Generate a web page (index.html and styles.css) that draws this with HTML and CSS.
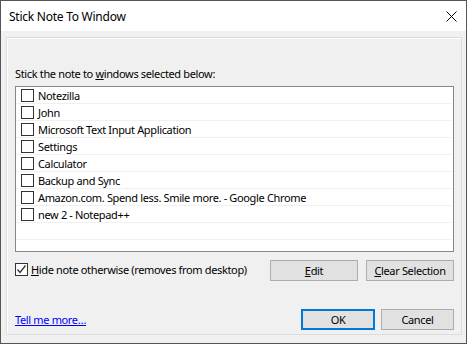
FILE: index.html
```html
<!DOCTYPE html>
<html lang="en">
<head>
  <meta charset="UTF-8" />
  <title>Stick Note To Window</title>
  <link rel="stylesheet" href="styles.css">
</head>
<body>
  <div class="window">
    <div class="title-bar">
      <span class="title">Stick Note To Window</span>
      <svg class="close" width="11" height="11" viewBox="0 0 11 11">
        <path d="M0.5 0.5 L10.5 10.5 M10.5 0.5 L0.5 10.5" stroke="#000" stroke-width="1" fill="none"/>
      </svg>
    </div>

    <div class="content">
      <div class="group">
        <div class="caption">Stick the note to <u>w</u>indows selected below:</div>

        <div class="list">
          <div class="row"><span class="check"></span>Notezilla</div>
          <div class="row"><span class="check"></span>John</div>
          <div class="row"><span class="check"></span>Microsoft Text Input Application</div>
          <div class="row"><span class="check"></span>Settings</div>
          <div class="row"><span class="check"></span>Calculator</div>
          <div class="row"><span class="check"></span>Backup and Sync</div>
          <div class="row"><span class="check"></span>Amazon.com. Spend less. Smile more. - Google Chrome</div>
          <div class="row"><span class="check"></span>new 2 - Notepad++</div>
          <div class="row"></div>
          <div class="row"></div>
        </div>

        <div class="options">
          <label class="hide-opt">
            <span class="check dark">
              <svg width="11" height="11" viewBox="0 0 11 11">
                <path d="M1.5 5.5 L4 8.5 L9.5 1.5" stroke="#333" stroke-width="1.3" fill="none"/>
              </svg>
            </span>
            <span><u>H</u>ide note otherwise (removes from desktop)</span>
          </label>
          <div class="buttons">
            <button class="btn wide"><u>E</u>dit</button>
            <button class="btn wide"><u>C</u>lear Selection</button>
          </div>
        </div>

        <div class="footer">
          <a href="#" class="more">Tell me more…</a>
          <div class="buttons small-gap">
            <button class="btn ok">OK</button>
            <button class="btn cancel">Cancel</button>
          </div>
        </div>
      </div>
    </div>
  </div>
</body>
</html>
```

FILE: styles.css
```css
body {
  margin: 0;
  font-family: "Segoe UI", "Noto Sans", sans-serif;
  font-size: 11px;
  letter-spacing: -0.35px;
  color: #000;
}
.window {
  width: 467px;
  height: 344px;
  box-sizing: border-box;
  border: 1px solid #555;
  background-color: #f0f0f0;
  display: flex;
  flex-direction: column;
}
.title-bar {
  height: 30px;
  background-color: #fff;
  display: flex;
  align-items: center;
  justify-content: space-between;
  padding: 0 9px 0 8px;
}
.title {
  font-size: 12px;
  letter-spacing: -0.25px;
}
.close {
  display: block;
}
.content {
  flex: 1;
  padding: 6px 4px 8px 5px;
  display: flex;
}
.group {
  flex: 1;
  border: 1px solid #dcdcdc;
  box-shadow: inset 1px 1px 0 #fff;
  padding: 28px 7px 4px 8px;
  display: flex;
  flex-direction: column;
}
.caption {
  line-height: 16px;
  margin-bottom: 4px;
}
.list {
  height: 166px;
  box-sizing: border-box;
  border: 1px solid #828790;
  background-color: #fff;
  overflow: hidden;
  padding: 0 1px 0 0;
}
.row {
  height: 16px;
  border-bottom: 1px solid #f0f0f0;
  display: flex;
  align-items: center;
  padding-left: 5px;
  white-space: nowrap;
}
.check {
  width: 13px;
  height: 13px;
  box-sizing: border-box;
  border: 1px solid #333;
  background-color: #fff;
  margin-right: 4px;
  flex-shrink: 0;
  display: flex;
  align-items: center;
  justify-content: center;
}
.check.dark {
  margin-right: 3px;
}
.options {
  display: flex;
  align-items: center;
  justify-content: space-between;
  margin-top: 8px;
}
.hide-opt {
  display: flex;
  align-items: center;
  margin-top: -3px;
}
.buttons {
  display: flex;
  gap: 8px;
}
.buttons.small-gap {
  gap: 6px;
}
.btn {
  font-family: inherit;
  font-size: 11px;
  letter-spacing: -0.35px;
  height: 21px;
  box-sizing: border-box;
  background-color: #e1e1e1;
  border: 1px solid #adadad;
  padding: 0;
  color: #000;
}
.btn.wide {
  width: 88px;
}
.btn.ok {
  width: 74px;
  border: 2px solid #0078d7;
}
.btn.cancel {
  width: 73px;
}
.footer {
  display: flex;
  align-items: center;
  justify-content: space-between;
  margin-top: auto;
}
.more {
  color: #0000ff;
  text-decoration: underline;
}
```
